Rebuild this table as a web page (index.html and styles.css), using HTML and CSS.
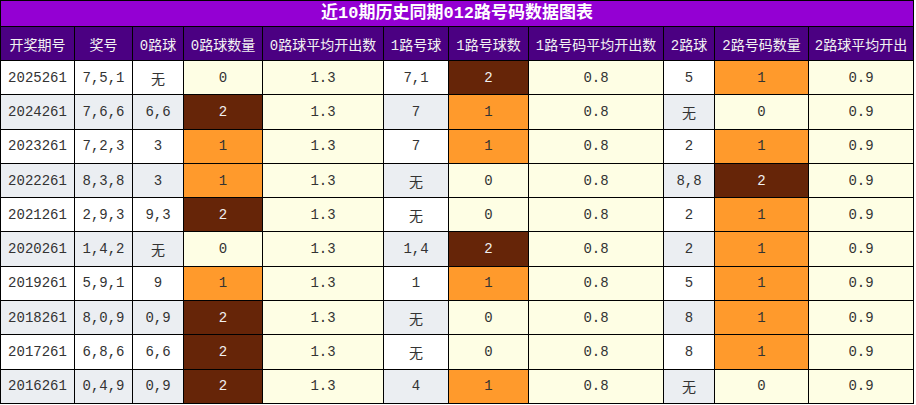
FILE: index.html
```html
<!DOCTYPE html>
<html lang="zh-CN">
<head>
<meta charset="utf-8">
<title>近10期历史同期012路号码数据图表</title>
<link rel="stylesheet" href="styles.css">
</head>
<body>
<table class="chart">
  <colgroup>
    <col class="c1"><col class="c2"><col class="c3"><col class="c4"><col class="c5"><col class="c6"><col class="c7"><col class="c8"><col class="c9"><col class="c10"><col class="c11">
  </colgroup>
  <thead>
    <tr class="title-row"><th colspan="11">近10期历史同期012路号码数据图表</th></tr>
    <tr class="head-row">
      <th>开奖期号</th><th>奖号</th><th>0路球</th><th>0路球数量</th><th>0路球平均开出数</th><th>1路号球</th><th>1路号球数</th><th>1路号码平均开出数</th><th>2路球</th><th>2路号码数量</th><th>2路球平均开出</th>
    </tr>
  </thead>
  <tbody>
    <tr><td>2025261</td><td>7,5,1</td><td>无</td><td class="n0">0</td><td class="avg">1.3</td><td>7,1</td><td class="n2">2</td><td class="avg">0.8</td><td>5</td><td class="n1">1</td><td class="avg">0.9</td></tr>
    <tr class="alt"><td>2024261</td><td>7,6,6</td><td>6,6</td><td class="n2">2</td><td class="avg">1.3</td><td>7</td><td class="n1">1</td><td class="avg">0.8</td><td>无</td><td class="n0">0</td><td class="avg">0.9</td></tr>
    <tr><td>2023261</td><td>7,2,3</td><td>3</td><td class="n1">1</td><td class="avg">1.3</td><td>7</td><td class="n1">1</td><td class="avg">0.8</td><td>2</td><td class="n1">1</td><td class="avg">0.9</td></tr>
    <tr class="alt"><td>2022261</td><td>8,3,8</td><td>3</td><td class="n1">1</td><td class="avg">1.3</td><td>无</td><td class="n0">0</td><td class="avg">0.8</td><td>8,8</td><td class="n2">2</td><td class="avg">0.9</td></tr>
    <tr><td>2021261</td><td>2,9,3</td><td>9,3</td><td class="n2">2</td><td class="avg">1.3</td><td>无</td><td class="n0">0</td><td class="avg">0.8</td><td>2</td><td class="n1">1</td><td class="avg">0.9</td></tr>
    <tr class="alt"><td>2020261</td><td>1,4,2</td><td>无</td><td class="n0">0</td><td class="avg">1.3</td><td>1,4</td><td class="n2">2</td><td class="avg">0.8</td><td>2</td><td class="n1">1</td><td class="avg">0.9</td></tr>
    <tr><td>2019261</td><td>5,9,1</td><td>9</td><td class="n1">1</td><td class="avg">1.3</td><td>1</td><td class="n1">1</td><td class="avg">0.8</td><td>5</td><td class="n1">1</td><td class="avg">0.9</td></tr>
    <tr class="alt"><td>2018261</td><td>8,0,9</td><td>0,9</td><td class="n2">2</td><td class="avg">1.3</td><td>无</td><td class="n0">0</td><td class="avg">0.8</td><td>8</td><td class="n1">1</td><td class="avg">0.9</td></tr>
    <tr><td>2017261</td><td>6,8,6</td><td>6,6</td><td class="n2">2</td><td class="avg">1.3</td><td>无</td><td class="n0">0</td><td class="avg">0.8</td><td>8</td><td class="n1">1</td><td class="avg">0.9</td></tr>
    <tr class="alt"><td>2016261</td><td>0,4,9</td><td>0,9</td><td class="n2">2</td><td class="avg">1.3</td><td>4</td><td class="n1">1</td><td class="avg">0.8</td><td>无</td><td class="n0">0</td><td class="avg">0.9</td></tr>
  </tbody>
</table>
</body>
</html>
```
FILE: styles.css
```css
html, body {
  margin: 0;
  padding: 0;
  background: #ffffff;
}

.chart {
  border-collapse: collapse;
  table-layout: fixed;
  width: 913px;
  font-family: "Liberation Mono", "Noto Sans CJK SC", monospace;
  font-size: 14px;
  color: #333333;
}

.c1 { width: 74px; }
.c2 { width: 58px; }
.c3 { width: 51px; }
.c4 { width: 79px; }
.c5 { width: 121px; }
.c6 { width: 65px; }
.c7 { width: 80px; }
.c8 { width: 135px; }
.c9 { width: 51px; }
.c10 { width: 94px; }
.c11 { width: 105px; }

.chart th,
.chart td {
  border: 1px solid #000000;
  padding: 0;
  text-align: center;
  vertical-align: middle;
  white-space: nowrap;
  overflow: hidden;
}

.title-row th {
  height: 25px;
  background: #9400d3;
  color: #ffffff;
  font-size: 17px;
  font-weight: bold;
  line-height: 25px;
}

.head-row th {
  height: 33px;
  background: #4b0082;
  color: #f2f2f2;
  font-weight: normal;
}

.chart tbody td {
  height: 33.3px;
  background: #ffffff;
}

.chart tbody tr.alt td {
  background: #ebeef2;
}

.chart tbody td.avg,
.chart tbody tr.alt td.avg,
.chart tbody td.n0,
.chart tbody tr.alt td.n0 {
  background: #fefee4;
}

.chart tbody td.n1,
.chart tbody tr.alt td.n1 {
  background: #ff9a2c;
}

.chart tbody td.n2,
.chart tbody tr.alt td.n2 {
  background: #662508;
  color: #f0f0f0;
}
```
